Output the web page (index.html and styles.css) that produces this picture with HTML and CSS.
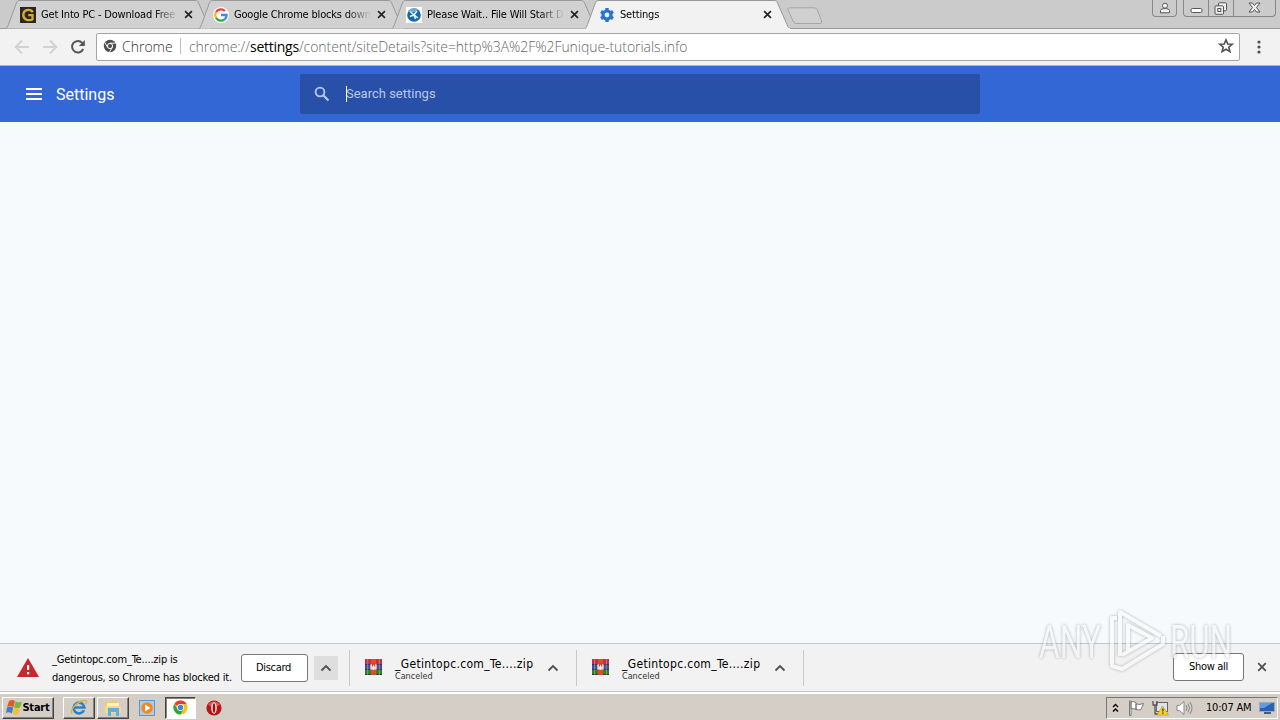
FILE: index.html
```html
<!DOCTYPE html>
<html lang="en">
<head>
  <meta charset="UTF-8">
  <meta name="viewport" content="width=device-width, initial-scale=1">
  <title>Settings</title>
  <link rel="stylesheet" href="styles.css">
</head>
<body>
  <!-- shared icons -->
  <svg class="defs" width="0" height="0">
    <symbol id="tab-shape" viewBox="0 0 206 29">
      <path d="M0 28.5 C1 28 1.500 27 2.500 24.500 L10 4 C11 1.200 12 .5 14 .5 H189 C191 .5 192 1.200 193 4 L202 24.500 C203 27 203.500 28 206 28.500"/>
    </symbol>
    <symbol id="close" viewBox="0 0 10 10">
      <path d="M1.2 1.2 8.8 8.8 M8.8 1.2 1.2 8.8" fill="none" stroke="currentColor" stroke-width="1.8"/>
    </symbol>
    <symbol id="chevron" viewBox="0 0 12 8">
      <path d="M1.5 6.5 6 2 10.5 6.5" fill="none" stroke="#505050" stroke-width="1.8"/>
    </symbol>
    <symbol id="chrome" viewBox="0 0 16 16">
      <circle cx="8" cy="8" r="7.5" fill="#fbc116"/>
      <path d="M8 8 1.5 4.2 A7.5 7.5 0 0 1 14.5 4.3 H8Z" fill="#df3e30"/>
      <path d="M1.5 4.2 A7.5 7.5 0 0 0 8 15.5 L11.2 9.8 8 8 4.8 9.8Z" fill="#2ba24c"/>
      <circle cx="8" cy="8" r="3.7" fill="#fff"/>
      <circle cx="8" cy="8" r="2.9" fill="#4285d4"/>
    </symbol>
    <symbol id="archive" viewBox="0 0 16 16">
      <path fill="#c32a55" d="M0 0h16v5H0z"/>
      <path fill="#404ab2" d="M0 5h16v5H0z"/>
      <path fill="#138b35" d="M0 10h16v5H0z"/>
      <path fill="#182044" d="M0 4.7h16v.7H0z M0 9.7h16v.7H0z M0 14.4h16v.6H0z"/>
      <path fill="#df4c2c" d="M5.5 0h5v15h-5z"/>
      <path fill="#e6a53b" opacity=".6" d="M2 0h1v15H2z M13 0h1v15h-1z"/>
      <path fill="#f3d9c8" d="M5 5h6v5H5z"/>
      <path fill="#d43e32" d="M6.5 4h3v3h-3z"/>
      <path fill="#fff" d="M7.5 5.5h1V10h-1z"/>
    </symbol>
  </svg>

  <div class="tab-strip">
    <div class="tab">
      <svg class="tab-bg"><use href="#tab-shape"/></svg>
      <svg class="favicon" viewBox="0 0 16 16">
        <rect width="16" height="16" fill="#2b261f"/>
        <path d="M12.7 5.2 C11.3 2.6 8.9 2.7 6.7 3.2 C2.2 4.5 2.2 11.5 6.7 12.8 C9 13.4 11.3 13.2 12.5 12.3 V8.2 H8.3" fill="none" stroke="#d5ad35" stroke-width="2.3"/>
      </svg>
      <span class="tab-title">Get Into PC - Download Free</span>
      <svg class="tab-close"><use href="#close"/></svg>
    </div>
    <div class="tab">
      <svg class="tab-bg"><use href="#tab-shape"/></svg>
      <svg class="favicon" viewBox="0 0 16 16">
        <circle cx="8" cy="8" r="8" fill="#fff"/>
        <g fill="none" stroke-width="2.3">
          <path d="M3 5.2 A5.7 5.7 0 0 1 12 4" stroke="#ea4335"/>
          <path d="M3 5.2 A5.7 5.7 0 0 0 3 10.8" stroke="#fbbc05"/>
          <path d="M3 10.8 A5.7 5.7 0 0 0 11.7 12.3" stroke="#34a853"/>
          <path d="M11.7 12.3 C13.1 11.1 13.7 9.7 13.6 8 H8" stroke="#4285f4"/>
        </g>
      </svg>
      <span class="tab-title">Google Chrome blocks down</span>
      <svg class="tab-close"><use href="#close"/></svg>
    </div>
    <div class="tab">
      <svg class="tab-bg"><use href="#tab-shape"/></svg>
      <svg class="favicon" viewBox="0 0 16 16">
        <rect width="16" height="16" fill="#fff"/>
        <circle cx="8" cy="8" r="6.8" fill="#1867ae"/>
        <path d="M2 5 A7 7 0 0 1 12 2.5 L9 5 Z" fill="#79a8cf"/>
        <path d="M4 4.5 12 11 M11 4 8 7.8 4 9.5 M8 8 9.5 12" stroke="#e5f4fc" stroke-width="1.5" fill="none"/>
      </svg>
      <span class="tab-title">Please Wait.. File Will Start D</span>
      <svg class="tab-close"><use href="#close"/></svg>
    </div>
    <div class="tab active">
      <svg class="tab-bg"><use href="#tab-shape"/></svg>
      <svg class="favicon" viewBox="0 0 16 16">
        <circle cx="8" cy="8" r="4" fill="none" stroke="#2b72d8" stroke-width="3.2"/>
        <path d="M8 1v3 M8 12v3 M2 4.5l2.5 1.5 M11.5 10l2.5 1.5 M2 11.5l2.5-1.5 M11.5 6 14 4.5" stroke="#2b72d8" stroke-width="3.4"/>
      </svg>
      <span class="tab-title">Settings</span>
      <svg class="tab-close"><use href="#close"/></svg>
    </div>
    <svg class="new-tab" viewBox="0 0 36 18">
      <path d="M2.5 .8 H27 Q29.5 .8 30.5 3 L34.5 14 Q35.3 16.5 33 16.5 H9 Q7 16.5 6 14 L1 3 Q.3 .8 2.5 .8Z" fill="#d0d0d0" stroke="#a5a5a5"/>
    </svg>
    <div class="window-user">
      <svg width="12" height="12" viewBox="0 0 12 12" fill="#f5f5f5" stroke="#555"><circle cx="6" cy="3.7" r="2.5"/><path d="M1.5 10.8 V8.5 Q2.2 6.7 4.5 6.7 H7.5 Q9.8 6.7 10.5 8.5 V10.8Z"/></svg>
    </div>
    <div class="window-buttons">
      <div class="win-btn"><svg width="13" height="14"><rect x="1" y="6.5" width="11" height="4" rx="1.5" fill="#fff" stroke="#555"/></svg></div>
      <div class="win-btn"><svg width="14" height="14" fill="#eee" stroke="#555"><rect x="4.5" y=".8" width="8" height="8" rx="1"/><rect x="1" y="3.8" width="8.5" height="8.5" rx="1"/><rect x="3.8" y="6.5" width="3" height="3"/></svg></div>
      <div class="win-btn wide"><svg width="13" height="12"><path d="M1 1h3.5L6.5 3.5 8.5 1H12L8.5 5.5 12 10H8.5L6.5 7.5 4.5 10H1L4.5 5.5Z" fill="#eee" stroke="#555"/></svg></div>
    </div>
  </div>

  <div class="toolbar">
    <svg class="nav" viewBox="0 0 16 16"><path d="M15 8H2 M8 1.5 1.7 8 8 14.5" fill="none" stroke="#d2d2d2" stroke-width="2"/></svg>
    <svg class="nav" viewBox="0 0 16 16"><path d="M1 8H14 M8 1.5 14.3 8 8 14.5" fill="none" stroke="#d2d2d2" stroke-width="2"/></svg>
    <svg class="nav reload" viewBox="0 0 16 16"><path d="M13.2 10 A5.8 5.8 0 1 1 12.2 3.8" fill="none" stroke="#555" stroke-width="2"/><path d="M14.8 1V7H8.8Z" fill="#555"/></svg>
    <div class="omnibox">
      <svg class="site-icon" viewBox="0 0 14 14"><circle cx="7" cy="7" r="6.2" fill="#505050"/><circle cx="7" cy="7" r="2.6" fill="#505050" stroke="#fff" stroke-width="1"/><path d="M7 4.2H12.5 M4.6 8.3 1.9 3.5 M9.4 8.3 6.5 13" stroke="#fff" stroke-width=".9"/></svg>
      <span class="site-name">Chrome</span>
      <span class="divider"></span>
      <span class="url">chrome://<b>settings</b>/content/siteDetails?site=http%3A%2F%2Funique-tutorials.info</span>
      <svg class="star" viewBox="0 0 16 16"><path d="M8 1.8 9.8 6 14.2 6.3 10.8 9.2 11.9 13.6 8 11.2 4.1 13.6 5.2 9.2 1.8 6.3 6.2 6Z" fill="none" stroke="#505050" stroke-width="1.6"/></svg>
    </div>
    <svg class="menu-dots" width="4" height="14" fill="#505050"><circle cx="2" cy="2" r="1.6"/><circle cx="2" cy="7" r="1.6"/><circle cx="2" cy="12" r="1.6"/></svg>
  </div>

  <header class="settings-header">
    <svg class="burger" width="16" height="12" fill="#fff"><path d="M0 0h16v2H0z M0 5h16v2H0z M0 10h16v2H0z"/></svg>
    <h1>Settings</h1>
    <div class="search">
      <svg class="search-icon" width="16" height="16" fill="none" stroke="#b6c9ec"><circle cx="6" cy="6" r="4.4" stroke-width="1.9"/><path d="M9.2 9.2 14.5 14.5" stroke-width="2.2"/></svg>
      <span class="caret"></span>
      <span class="search-text">Search settings</span>
    </div>
  </header>

  <main class="content"></main>

  <div class="download-shelf">
    <svg class="warning" viewBox="0 0 22 20"><path d="M11 0 22 19H0Z" fill="#c5292f"/><path d="M10 7h2.2v5H10z M10 14h2.2v2.2H10z" fill="#fff"/></svg>
    <div class="danger-text">_Getintopc.com_Te....zip is<br>dangerous, so Chrome has blocked it.</div>
    <div class="btn discard"><span>Discard</span></div>
    <div class="drop"><svg width="12" height="8"><use href="#chevron"/></svg></div>
    <div class="download first">
      <svg class="file-icon"><use href="#archive"/></svg>
      <div class="file"><span class="file-name">_Getintopc.com_Te....zip</span><span class="status">Canceled</span></div>
      <svg width="12" height="8"><use href="#chevron"/></svg>
    </div>
    <div class="download">
      <svg class="file-icon"><use href="#archive"/></svg>
      <div class="file"><span class="file-name">_Getintopc.com_Te....zip</span><span class="status">Canceled</span></div>
      <svg width="12" height="8"><use href="#chevron"/></svg>
    </div>
    <div class="shelf-end"></div>
    <div class="btn show-all"><span>Show all</span></div>
    <svg class="shelf-close"><use href="#close"/></svg>
  </div>

  <div class="taskbar">
    <div class="task start">
      <svg width="16" height="17" viewBox="0 0 16 17"><path d="M3 2 Q6 0 9 2 L7.5 8 Q4.500 6.500 1 8Z" fill="#e4572b"/><path d="M9.500 2.500 Q13 4 16 2.500 L14 8.500 Q11 10 8 8.300Z" fill="#7ab83c"/><path d="M1 8.500 Q4 7 7.300 8.500 L5.800 14.500 Q3 12.500 0 14Z" fill="#3e7fc4"/><path d="M8 9 Q11 10.500 14 9.200 L12.300 15 Q9.500 16.500 6.500 14.800Z" fill="#f4c02e"/></svg>
      <span>Start</span>
    </div>
    <div class="task ie">
      <svg width="18" height="17" viewBox="0 0 20 18"><path d="M15.5 12 A6 6 0 1 1 16 9 H5" fill="none" stroke="#2683cf" stroke-width="3"/><path d="M2.5 16 C-1 13 6 4 14 1.5 C18 .3 19 2 17.5 5" fill="none" stroke="#d8b336" stroke-width="1.5"/></svg>
    </div>
    <div class="task folder">
      <svg width="18" height="18" viewBox="0 0 18 18"><path d="M1 3h5l1-1.5h6V4h3v10H1Z" fill="#edcb68"/><path d="M3 4h12v4H3z" fill="#fff3bd"/><path d="M1 7h16v7H1z" fill="#f4da88"/><path d="M4 9h11v8h-3v-4H7v4H4Z" fill="#59b2de"/></svg>
    </div>
    <svg class="player" width="16" height="16"><rect x=".5" y=".5" width="15" height="15" fill="#aecce7" stroke="#5c96cb"/><circle cx="8" cy="8" r="5.8" fill="#f08a1d"/><path d="M6 4.5 11.5 8 6 11.5Z" fill="#fff"/></svg>
    <div class="task current"><svg width="15" height="15"><use href="#chrome"/></svg></div>
    <svg class="opera" width="16" height="16"><ellipse cx="8" cy="8" rx="7.6" ry="7.6" fill="#b71518"/><path d="M2 5 A7 7 0 0 1 14 5 Q8 8 2 5Z" fill="#d85a54"/><ellipse cx="8" cy="8" rx="2.8" ry="5.7" fill="#f8e8e5"/><ellipse cx="8" cy="8" rx="1.3" ry="4.7" fill="#9d0e13"/></svg>
    <div class="tray">
      <svg class="more" width="7" height="10" fill="none" stroke="#000" stroke-width="1.4"><path d="M1 4 3.5 1.5 6 4 M1 8.5 3.5 6 6 8.5"/></svg>
      <svg class="flag" width="17" height="16" fill="#fff" stroke="#777"><path d="M1.5 1V15.5H3V1Z M3 2 Q5 1 8 2.5 V9.5 Q5.5 8 3 9Z M8 4 Q12 5 15.5 3.5 L13 9.5 Q11 10.5 8 9.5Z"/></svg>
      <svg class="network" width="17" height="16"><rect x="4.5" y="2.5" width="11" height="9" fill="#dce4e9" stroke="#666"/><path d="M1 1V5H5V1 M3 5V14H9" fill="none" stroke="#555" stroke-width="1.3"/><path d="M10.5 6 16.5 15H5Z" fill="#f6d328" stroke="#b79516" stroke-width=".6"/><path d="M10.2 8.5h1.3v3h-1.3z M10.2 12.5h1.3v1.3h-1.3z" fill="#333"/></svg>
      <svg class="sound" width="17" height="16" fill="none" stroke="#888"><path d="M1 5.5H3.5L8 1.5V14.5L3.5 10.5H1Z" fill="#fff"/><path d="M10 5 Q12 8 10 11 M12 3.5 Q15 8 12 12.5 M14 2 Q18 8 14 14"/></svg>
      <span class="clock">10:07 AM</span>
      <svg class="desktop" width="16" height="14"><path d="M.5 1.5h15v9H.5z" fill="#2862b7" stroke="#93acc5"/><path d="M1 2h12L5 7H1Z" fill="#649be0"/><path d="M5 11h7v2H5z" fill="#475c7b"/></svg>
    </div>
  </div>

  <svg class="watermark" viewBox="0 0 200 72">
    <g class="wm-text">
      <text x="3" y="53" textLength="62" lengthAdjust="spacingAndGlyphs">ANY</text>
      <text x="134" y="53" textLength="62" lengthAdjust="spacingAndGlyphs">RUN</text>
    </g>
    <g class="wm-logo">
      <path d="M84 51 V7 L125 31"/>
      <path d="M92 48 V20 L116 33 L86 50"/>
      <path d="M81 13 H76 V61 L86 64 L127 39 V31"/>
    </g>
  </svg>
</body>
</html>
```
FILE: styles.css
```css
* {
  box-sizing: border-box;
}

body {
  width: 1280px;
  height: 720px;
  margin: 0;
  display: flex;
  flex-direction: column;
  overflow: hidden;
  position: relative;
  font-family: "DejaVu Sans Condensed", "DejaVu Sans", sans-serif;
  font-size: 11px;
  color: #000;
  background: #f7fafd;
}

svg {
  display: block;
  flex: none;
}

.defs {
  position: absolute;
}

/* tabs */
.tab-strip {
  height: 29px;
  flex: none;
  display: flex;
  padding-left: 6px;
  background: #cbcbcb;
  border-bottom: 1px solid #999;
}

.tab {
  width: 206px;
  height: 29px;
  flex: none;
  display: flex;
  align-items: center;
  position: relative;
  margin-right: -13px;
  padding: 0 12px 0 14px;
}

.tab-bg {
  position: absolute;
  left: 0;
  top: 0;
  width: 206px;
  height: 29px;
  fill: #d1d1d1;
  stroke: #999;
}

.tab.active {
  z-index: 2;
}

.tab.active .tab-bg {
  fill: #f2f2f2;
}

.tab.active::after {
  content: "";
  position: absolute;
  left: 1px;
  right: 1px;
  bottom: 0;
  height: 1px;
  background: #f2f2f2;
}

.favicon {
  width: 16px;
  height: 16px;
  position: relative;
}

.tab-title {
  position: relative;
  width: 136px;
  margin-left: 5px;
  line-height: 16px;
  letter-spacing: -0.18px;
  white-space: nowrap;
  overflow: hidden;
  -webkit-mask-image: linear-gradient(to right, #000 112px, transparent 138px);
  mask-image: linear-gradient(to right, #000 112px, transparent 138px);
}

.tab-close {
  position: relative;
  width: 9px;
  height: 9px;
  margin-left: 7px;
  color: #222;
}

.new-tab {
  width: 36px;
  height: 18px;
  margin: 7px 0 0 9px;
}

.window-user {
  width: 25px;
  height: 17px;
  margin-left: auto;
  padding: 2px 0 0 6px;
  border: 1px solid #888;
  border-top: 0;
  border-radius: 0 0 4px 4px;
}

.window-buttons {
  display: flex;
  height: 17px;
  margin: 0 4px 0 6px;
  border: 1px solid #888;
  border-top: 0;
  border-radius: 0 0 4px 4px;
}

.win-btn {
  width: 25px;
  display: flex;
  justify-content: center;
  padding-top: 2px;
  border-right: 1px solid #888;
}

.win-btn.wide {
  width: 41px;
  border: 0;
}

/* toolbar */
.toolbar {
  height: 37px;
  flex: none;
  display: flex;
  align-items: center;
  padding-left: 14px;
  background: #f2f2f2;
  border-bottom: 1px solid #b6b4b6;
}

.nav {
  width: 16px;
  height: 16px;
  margin-right: 12px;
}

.nav.reload {
  margin-right: 10px;
}

.omnibox {
  width: 1144px;
  height: 28px;
  display: flex;
  align-items: center;
  padding: 0 5px 2px 6px;
  background: #fff;
  border: 1px solid #a6a6a6;
  border-radius: 2px;
  font-family: "Open Sans", "Noto Sans", sans-serif;
  font-size: 14px;
  font-weight: 300;
}

.site-icon {
  width: 14px;
  height: 14px;
}

.site-name {
  margin-left: 5px;
  width: 50px;
  color: #333;
}

.divider {
  width: 1px;
  height: 16px;
  margin: 0 8px;
  background: #bbb;
}

.url {
  color: #666;
  letter-spacing: -0.06px;
  white-space: nowrap;
}

.url b {
  font-weight: 400;
  letter-spacing: -0.25px;
  color: #000;
}

.star {
  width: 16px;
  height: 16px;
  margin-left: auto;
}

.menu-dots {
  margin-left: 17px;
}

/* settings page */
.settings-header {
  height: 56px;
  flex: none;
  display: flex;
  align-items: center;
  padding-left: 26px;
  background: #3367d6;
  color: #fff;
  font-family: Roboto, sans-serif;
}

h1 {
  width: 244px;
  margin: 1px 0 0 14px;
  font-size: 16px;
  font-weight: 400;
}

.search {
  width: 680px;
  height: 40px;
  display: flex;
  align-items: center;
  padding-left: 14px;
  background: #2950a8;
  border-radius: 2px;
}

.caret {
  width: 1px;
  height: 16px;
  margin-left: 16px;
  background: #fff;
}

.search-text {
  margin: -2px 0 0 -1px;
  color: #b5c8ee;
  font-size: 13px;
}

.content {
  flex: 1;
}

/* downloads */
.download-shelf {
  height: 49px;
  flex: none;
  display: flex;
  align-items: center;
  background: #f2f2f2;
  border-top: 1px solid #c5c5c5;
  border-bottom: 1px solid #c5c5c5;
}

.warning {
  width: 22px;
  height: 20px;
  margin-left: 17px;
}

.danger-text {
  width: 189px;
  margin: 2px 0 0 13px;
  line-height: 18px;
  letter-spacing: -0.19px;
  white-space: nowrap;
}

.btn {
  display: flex;
  align-items: center;
  justify-content: center;
  height: 28px;
  background: #fff;
  border: 1px solid #777;
  border-radius: 3px;
  letter-spacing: -0.3px;
}

.discard {
  width: 67px;
}

.discard span {
  margin-left: -2px;
}

.drop {
  width: 24px;
  height: 24px;
  margin-left: 6px;
  display: flex;
  align-items: center;
  justify-content: center;
  background: #dedede;
}

.download {
  width: 227px;
  height: 36px;
  display: flex;
  align-items: center;
  padding-left: 15px;
  border-left: 1px solid #c9c9c9;
}

.download.first {
  margin-left: 11px;
}

.file-icon {
  width: 17px;
  height: 17px;
}

.file {
  width: 152px;
  margin: 4px 0 0 13px;
  display: flex;
  flex-direction: column;
}

.file-name {
  font-size: 12px;
  line-height: 13px;
  letter-spacing: 0.33px;
  white-space: nowrap;
}

.status {
  font-size: 9px;
  line-height: 10px;
  color: #333;
}

.shelf-end {
  width: 1px;
  height: 36px;
  background: #c9c9c9;
}

.show-all {
  width: 71px;
  margin: -2px 0 0 auto;
}

.shelf-close {
  width: 10px;
  height: 10px;
  margin: -1px 13px 0;
  color: #505050;
}

/* taskbar */
.taskbar {
  height: 28px;
  flex: none;
  display: flex;
  align-items: center;
  padding: 1px 2px 0;
  background: #d5cec6;
  border-top: 2px solid #fff;
}

.task {
  height: 22px;
  display: flex;
  align-items: center;
  justify-content: center;
  border: 1px solid;
  border-color: #fff #444 #444 #fff;
  box-shadow: inset -1px -1px #858079;
}

.start {
  width: 52px;
  font-weight: bold;
  letter-spacing: -0.2px;
}

.ie {
  width: 32px;
  margin-left: 9px;
}

.folder {
  width: 32px;
  margin-left: 2px;
}

.player {
  margin-left: 10px;
}

.current {
  width: 31px;
  margin-left: 10px;
  background: #fff;
  border-color: #444 #fff #fff #444;
  box-shadow: inset 1px 1px #858079;
}

.opera {
  margin-left: 10px;
}

.tray {
  width: 172px;
  height: 22px;
  margin-left: auto;
  display: flex;
  align-items: center;
  padding-left: 5px;
  border: 1px solid;
  border-color: #777 #fff #fff #777;
}

.flag {
  margin-left: 9px;
}

.network {
  margin-left: 7px;
}

.sound {
  margin-left: 7px;
}

.clock {
  width: 47px;
  margin: 0 7px 0 13px;
  white-space: nowrap;
  letter-spacing: -0.2px;
}

.desktop {
  margin-left: -1px;
}

/* overlay logo */
.watermark {
  position: absolute;
  left: 1036px;
  top: 605px;
  width: 200px;
  height: 72px;
  opacity: 0.65;
  filter: drop-shadow(0 0 1.5px #888);
  pointer-events: none;
}

.wm-text {
  fill: #f6f6f6;
  font-family: Roboto, sans-serif;
  font-size: 47px;
}

.wm-logo {
  fill: none;
  stroke: #fafafa;
  stroke-width: 4;
  stroke-linejoin: round;
}
```
